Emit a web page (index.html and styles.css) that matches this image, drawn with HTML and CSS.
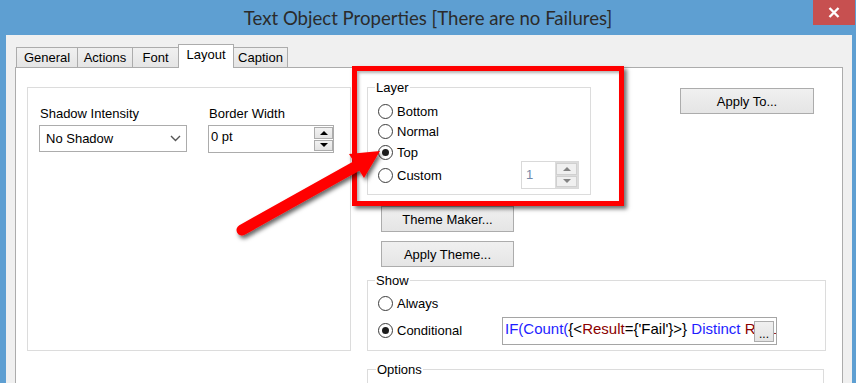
FILE: index.html
```html
<!DOCTYPE html>
<html lang="en">
<head>
    <meta charset="UTF-8">
    <title>Text Object Properties</title>
    <link rel="stylesheet" href="styles.css">
</head>
<body>
    <div class="window">
        <div class="titlebar">
            <span></span>
            <div class="title">Text Object Properties [There are no Failures]</div>
            <div class="close">
                <svg width="12" height="11" viewBox="0 0 12 11">
                    <path d="M1.5 1 L10.5 10 M10.5 1 L1.5 10" stroke="#fff" stroke-width="2.4" fill="none"/>
                </svg>
            </div>
        </div>

        <div class="frame">
            <div class="tabs">
                <div class="tab tab-general">General</div>
                <div class="tab tab-actions">Actions</div>
                <div class="tab tab-font">Font</div>
                <div class="tab tab-layout selected">Layout</div>
                <div class="tab tab-caption">Caption</div>
            </div>

            <div class="panel">
                <div class="left-box">
                    <div class="field field-shadow">
                        <div class="label">Shadow Intensity</div>
                        <div class="select">
                            <span>No Shadow</span>
                            <svg width="11" height="7" viewBox="0 0 11 7">
                                <path d="M1 1 L5.5 5.5 L10 1" fill="none" stroke="#555" stroke-width="1.4"/>
                            </svg>
                        </div>
                    </div>
                    <div class="field field-border">
                        <div class="label">Border Width</div>
                        <div class="spin">
                            <span class="spin-value">0 pt</span>
                            <div class="spin-btns">
                                <div class="spin-btn up"></div>
                                <div class="spin-btn down"></div>
                            </div>
                        </div>
                    </div>
                </div>

                <div class="right-col">
                    <div class="top-row">
                        <fieldset class="group group-layer">
                            <legend>Layer</legend>
                            <div class="radio-row"><span class="radio"></span>Bottom</div>
                            <div class="radio-row"><span class="radio"></span>Normal</div>
                            <div class="radio-row row-top"><span class="radio checked"></span>Top</div>
                            <div class="radio-row row-custom">
                                <span class="radio"></span>Custom
                                <div class="spin spin-custom disabled">
                                    <span class="spin-value">1</span>
                                    <div class="spin-btns">
                                        <div class="spin-btn up"></div>
                                        <div class="spin-btn down"></div>
                                    </div>
                                </div>
                            </div>
                        </fieldset>
                        <button class="btn btn-apply-to">Apply To...</button>
                    </div>

                    <button class="btn btn-theme btn-theme-maker">Theme Maker...</button>
                    <button class="btn btn-theme btn-apply-theme">Apply Theme...</button>

                    <fieldset class="group group-show">
                        <legend>Show</legend>
                        <div class="radio-row"><span class="radio"></span>Always</div>
                        <div class="radio-row row-conditional">
                            <span class="radio checked"></span>
                            <span class="cond-label">Conditional</span>
                            <div class="expr">
                                <span class="fn">IF(Count(</span><span>{&lt;</span><span class="fld">Result</span><span>={'Fail'}&gt;}</span><span class="fn"> Distinct </span><span class="fld">Result</span>
                                <div class="expr-btn">...</div>
                            </div>
                        </div>
                    </fieldset>

                    <fieldset class="group group-options">
                        <legend>Options</legend>
                    </fieldset>
                </div>
            </div>
        </div>
    </div>

    <!-- annotation drawn over the dialog -->
    <div class="highlight"></div>
    <svg class="arrow" width="856" height="383" viewBox="0 0 856 383">
        <defs>
            <filter id="shade" x="-20%" y="-20%" width="140%" height="150%">
                <feDropShadow dx="2" dy="3" stdDeviation="2" flood-color="#000" flood-opacity="0.6"/>
            </filter>
        </defs>
        <g filter="url(#shade)">
            <line x1="242" y1="230" x2="360" y2="164" stroke="#ff0000" stroke-width="11" stroke-linecap="round"/>
            <polygon points="380,151 349,154 364,178" fill="#ff0000"/>
        </g>
    </svg>
</body>
</html>
```

FILE: styles.css
```css
body {
    margin: 0;
    width: 856px;
    height: 383px;
    overflow: hidden;
    position: relative;
    background-color: #5e9fd2;
    font-family: 'Liberation Sans', Arial, sans-serif;
    font-size: 13px;
    color: #000;
}

.titlebar {
    display: grid;
    grid-template-columns: 43px 1fr 43px;
    height: 35px;
}

.title {
    text-align: center;
    font-family: Lato, 'Liberation Sans', sans-serif;
    font-size: 18.6px;
    line-height: 36px;
    color: #2b2b2b;
}

.close {
    width: 42px;
    height: 25px;
    background-color: #c75050;
    display: flex;
    align-items: center;
    justify-content: center;
}

.frame {
    margin: 0 4px 0 6px;
    height: 348px;
    box-sizing: border-box;
    background-color: #f0f0f0;
    padding: 9px 9px 0;
}

/* tab strip */
.tabs {
    display: flex;
    align-items: flex-end;
    height: 23px;
    padding-left: 1px;
    position: relative;
    z-index: 1;
}

.tab {
    height: 20px;
    box-sizing: border-box;
    border: 1px solid #acacac;
    border-bottom: none;
    background: linear-gradient(#f0f0f0, #e5e5e5);
    margin-left: -1px;
    display: flex;
    align-items: center;
    justify-content: center;
    line-height: 15px;
}

.tab-general { width: 62px; margin-left: 0; }
.tab-actions { width: 56px; }
.tab-font { width: 47px; }
.tab-layout { width: 56px; }
.tab-caption { width: 55px; }

.tab.selected {
    height: 24px;
    margin-bottom: -1px;
    background: #fff;
    padding-bottom: 5px;
}

.panel {
    background-color: #fff;
    border: 1px solid #acacac;
    border-bottom: none;
    height: 303px;
    overflow: hidden;
    padding: 12px 11px 0;
    display: flex;
    align-items: flex-start;
}

/* left group */
.left-box {
    width: 324px;
    height: 264px;
    box-sizing: border-box;
    border: 1px solid #dcdcdc;
    margin-top: 7px;
    padding: 18px 11px;
    display: flex;
    gap: 21px;
}

.label {
    line-height: 15px;
    padding-left: 1px;
    margin-bottom: 4px;
}

.select {
    width: 148px;
    height: 27px;
    box-sizing: border-box;
    border: 1px solid #acacac;
    display: flex;
    align-items: center;
    justify-content: space-between;
    padding: 0 5px 0 6px;
}

.spin {
    height: 28px;
    box-sizing: border-box;
    border: 1px solid #acacac;
    display: flex;
    justify-content: space-between;
    padding: 1px 0 1px 2px;
}

.field-border .spin {
    width: 126px;
}

.spin-value {
    line-height: 15px;
    padding-top: 2px;
}

.spin-btns {
    display: flex;
    flex-direction: column;
    gap: 1px;
    width: 19px;
}

.spin-btn {
    flex: 1;
    border: 1px solid #acacac;
    background: linear-gradient(#f2f2f2, #e3e3e3);
    display: flex;
    align-items: center;
    justify-content: center;
}

.spin-btn::after {
    content: "";
    border-left: 4px solid transparent;
    border-right: 4px solid transparent;
}

.spin-btn.up::after {
    border-bottom: 4px solid #000;
}

.spin-btn.down::after {
    border-top: 4px solid #000;
}

.spin-custom {
    width: 58px;
    margin-left: auto;
    border-color: #d9d9d9;
    padding: 0;
}

.spin-custom .spin-value {
    color: #7389a8;
    padding-left: 4px;
    padding-top: 5px;
}

.spin-custom .spin-btns {
    width: 21px;
    padding: 1px;
    gap: 1px;
    background: #dcdcdc;
}

.spin-custom .spin-btn {
    border-color: #d0d0d0;
    background: #f0f0f0;
}

.spin-custom .spin-btn.up::after {
    border-bottom-color: #838383;
}

.spin-custom .spin-btn.down::after {
    border-top-color: #838383;
}

/* right column */
.right-col {
    margin-left: 16px;
    width: 459px;
}

.top-row {
    display: flex;
    align-items: flex-start;
}

.group {
    margin: 0;
    border: 1px solid #dcdcdc;
    min-width: 0;
    box-sizing: border-box;
}

legend {
    padding: 0 1px;
    margin-left: -3px;
    line-height: 15px;
}

.group-layer {
    width: 224px;
    height: 115px;
    padding: 6px 11px 6px 10px;
}

.radio-row {
    display: flex;
    align-items: center;
    gap: 4px;
    height: 20px;
    line-height: 15px;
}

.row-top {
    margin-top: 1px;
}

.row-custom {
    height: 26px;
}

.radio {
    width: 15px;
    height: 15px;
    box-sizing: border-box;
    border: 1px solid #3c3c3c;
    border-radius: 50%;
    background: #fff;
    flex: none;
    display: flex;
    align-items: center;
    justify-content: center;
}

.radio.checked::after {
    content: "";
    width: 7px;
    height: 7px;
    border-radius: 50%;
    background: #1c1c1c;
}

.btn {
    display: block;
    box-sizing: border-box;
    border: 1px solid #acacac;
    background: linear-gradient(#f0f0f0, #e5e5e5);
    font-family: 'Liberation Sans', Arial, sans-serif;
    font-size: 13px;
    color: #000;
    padding: 0;
}

.btn-apply-to {
    width: 134px;
    height: 26px;
    margin: 8px 0 0 89px;
}

.btn-theme {
    width: 133px;
    height: 26px;
    margin-left: 14px;
}

.btn-theme-maker {
    margin-top: 11px;
}

.btn-apply-theme {
    margin-top: 9px;
}

.group-show {
    width: 459px;
    height: 78px;
    margin-top: 6px;
    padding: 5px 11px 6px 10px;
}

.row-conditional {
    height: 27px;
    margin-top: 4px;
}

.cond-label {
    width: 101px;
}

.expr {
    width: 275px;
    height: 28px;
    box-sizing: border-box;
    border: 1px solid #a5a5a5;
    position: relative;
    overflow: hidden;
    white-space: nowrap;
    font-size: 15px;
    line-height: 22px;
    padding-left: 2px;
    color: #000;
}

.fn {
    color: #1e1eff;
}

.fld {
    color: #8b0000;
}

.expr-btn {
    position: absolute;
    top: 3px;
    right: 2px;
    width: 20px;
    height: 21px;
    box-sizing: border-box;
    border: 1px solid #acacac;
    background: linear-gradient(#f0f0f0, #e3e3e3);
    font-size: 12px;
    line-height: 24px;
    text-align: center;
}

.group-options {
    width: 457px;
    height: 100px;
    margin-top: 11px;
    padding: 5px 11px;
}

/* red annotation box around the Layer group */
.highlight {
    position: absolute;
    left: 352px;
    top: 66px;
    width: 272px;
    height: 140px;
    box-sizing: border-box;
    border: 5px solid #ff0000;
    box-shadow: 3px 3px 4px rgba(0, 0, 0, 0.55), inset 2px 2px 3px rgba(0, 0, 0, 0.3);
}

.arrow {
    position: absolute;
    left: 0;
    top: 0;
    pointer-events: none;
}
```
